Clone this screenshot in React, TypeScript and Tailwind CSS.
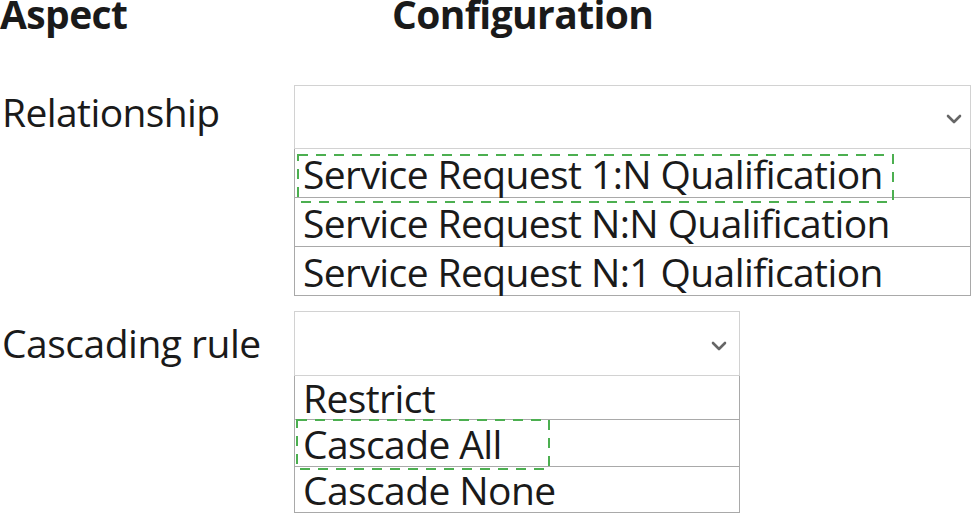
import React from "react";

function Chevron() {
  return (
    <svg width="16" height="10" viewBox="0 0 16 10" fill="none">
      <path d="M2 2 L8 8 L14 2" stroke="#666666" strokeWidth="2.6" strokeLinecap="round" strokeLinejoin="round" />
    </svg>
  );
}

function DashBox({ className }: { className: string }) {
  return (
    <svg className={`absolute pointer-events-none ${className}`} preserveAspectRatio="none">
      <rect x="1" y="1" width="calc(100% - 2px)" height="calc(100% - 2px)" fill="none" stroke="#4caf50" strokeWidth="2" strokeDasharray="10 8" />
    </svg>
  );
}

export default function App() {
  const font = { fontFamily: '"Open Sans", "Noto Sans", sans-serif' };
  return (
    <div className="w-[973px] h-[513px] bg-white overflow-hidden text-[#1a1a1a]" style={font}>
      <div className="flex h-[85px] text-[39px] font-bold leading-[28px]">
        <div className="w-[392px] tracking-[-0.6px]">Aspect</div>
        <div className="tracking-[-0.6px]">Configuration</div>
      </div>

      <div className="flex">
        <div className="w-[294px] pt-[2px] pl-[2px] text-[39px] leading-[50px] tracking-[-0.6px]">Relationship</div>
        <div className="w-[677px]">
          <div className="h-[64px] border border-[#d2d2d2] flex items-center justify-end pr-[8px] pt-[4px]">
            <Chevron />
          </div>
          <div className="border-x border-b border-[#a9a9a9] divide-y divide-[#a9a9a9] text-[39px] tracking-[-0.6px]">
            <div className="relative h-[49px] leading-[50px] pl-[8px]">
              <span>Service Request 1:N Qualification</span>
              <DashBox className="left-[2px] top-[5px] w-[597px] h-[49px]" />
            </div>
            <div className="h-[49px] leading-[50px] pl-[8px]">Service Request N:N Qualification</div>
            <div className="h-[48px] leading-[49px] pl-[8px]">Service Request N:1 Qualification</div>
          </div>
        </div>
      </div>

      <div className="flex mt-[15px]">
        <div className="w-[294px] pt-[7px] pl-[2px] text-[39px] leading-[50px] tracking-[-0.5px]">Cascading rule</div>
        <div className="w-[446px]">
          <div className="h-[65px] border border-[#d2d2d2] flex items-center justify-end pr-[12px] pt-[4px]">
            <Chevron />
          </div>
          <div className="border-x border-b border-[#a9a9a9] divide-y divide-[#a9a9a9] text-[39px] tracking-[-0.6px]">
            <div className="h-[44px] leading-[44px] pl-[8px]">Restrict</div>
            <div className="relative h-[47px] leading-[47px] pl-[8px]">
              <span>Cascade All</span>
              <DashBox className="left-[1px] top-[-1px] w-[254px] h-[51px]" />
            </div>
            <div className="h-[45px] leading-[45px] pl-[8px]">Cascade None</div>
          </div>
        </div>
      </div>
    </div>
  );
}
